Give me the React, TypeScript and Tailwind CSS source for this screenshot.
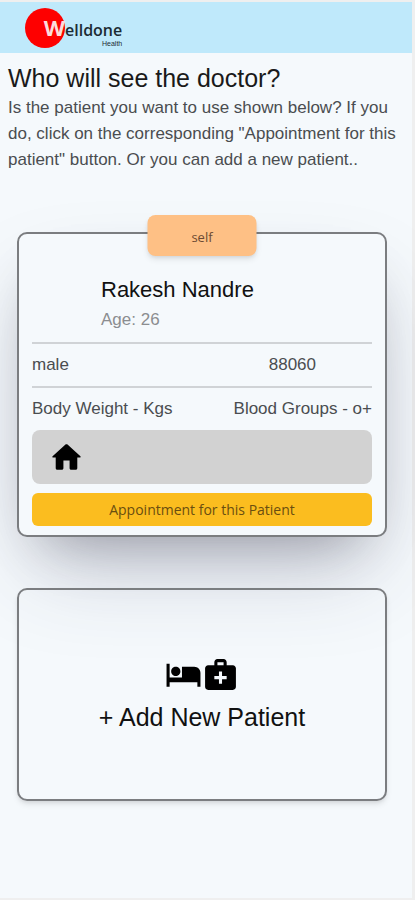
import React from 'react';
import { MdHotel, MdMedicalServices } from 'react-icons/md';

const patients = [
  { id: 1, relation: 'self', name: 'Rakesh Nandre', age: 26, gender: 'male', phone: '88060', weight: '', blood: 'o+' }
];

type Patient = (typeof patients)[number];

const HomeIcon = () => (
  <svg viewBox="0 0 24 24" width={37} height={37} fill="currentColor" className="text-black" aria-hidden="true">
    <path d="M10 19v-5h4v5c0 .55.45 1 1 1h3c.55 0 1-.45 1-1v-7h1.7c.46 0 .68-.57.33-.87L12.67 3.6c-.38-.34-.96-.34-1.34 0l-8.36 7.53c-.34.3-.13.87.33.87H5v7c0 .55.45 1 1 1h3c.55 0 1-.45 1-1z" />
  </svg>
);

const Header = () => (
  <header className="flex h-[51px] items-center bg-[#bfe9fb] pl-[25px]">
    <a href="#home" className="flex items-center">
      <span className="flex size-10 shrink-0 items-center justify-end rounded-full bg-[#fe0000] font-['Open_Sans',sans-serif] text-[22px] font-bold text-[#fbdcdc]">
        W
      </span>
      <span className="flex flex-col items-end pt-4 text-[#1c2b33]">
        <span className="font-['Open_Sans',sans-serif] text-base leading-4 font-semibold">elldone</span>
        <span className="text-[7px] leading-3">Health</span>
      </span>
    </a>
  </header>
);

const PatientCard = ({ patient }: { patient: Patient }) => (
  <article className="relative rounded-[10px] border-2 border-[#7b7d80] bg-[#f5f9fc] px-[13px] pt-10 pb-[9px] shadow-[0_45px_90px_-18px_rgba(50,50,93,0.25),0_27px_54px_-27px_rgba(0,0,0,0.3)]">
    <span className="absolute -top-[19px] left-1/2 flex h-[41px] w-[109px] -translate-x-1/2 items-center justify-center rounded-lg bg-[#fec085] pt-1 font-['Open_Sans',sans-serif] text-[13px] text-[#6b4a33] shadow-md">
      {patient.relation}
    </span>
    <div className="pb-2 pl-[69px]">
      <h2 className="text-[22px] leading-8 text-[#111]">{patient.name}</h2>
      <p className="text-[17px] leading-7 text-[#8b8d90]">Age: {patient.age}</p>
    </div>
    <div className="flex h-11 items-center justify-between border-t-2 border-[#d0d3d6] pr-14">
      <span>{patient.gender}</span>
      <span>{patient.phone}</span>
    </div>
    <div className="flex h-11 items-center justify-between border-t-2 border-[#d0d3d6]">
      <span>Body Weight - {patient.weight}Kgs</span>
      <span>Blood Groups - {patient.blood}</span>
    </div>
    <div className="flex h-[54px] items-center rounded-lg bg-[#d2d2d2] pl-4">
      <HomeIcon />
    </div>
    <button
      type="button"
      className="mt-[9px] h-[33px] w-full rounded-md bg-[#fbbd1f] font-['Open_Sans',sans-serif] text-sm text-[#6a4e10]"
    >
      Appointment for this Patient
    </button>
  </article>
);

const App = () => {
  return (
    <div className="min-h-screen border-y-2 border-r-3 border-[#efefef] bg-[#f5f9fc] font-['Liberation_Sans',Arial,sans-serif] text-[17px] text-[#4a4d50]">
      <Header />
      <main className="pb-10">
        <section className="px-2 pt-2">
          <h1 className="text-[25px] leading-[34px] text-[#1a1a1a]">Who will see the doctor?</h1>
          <p className="leading-[26px]">
            Is the patient you want to use shown below? If you do, click on the corresponding "Appointment for this
            patient" button. Or you can add a new patient..
          </p>
        </section>
        <section className="mt-[59px] flex flex-col gap-[51px] pr-[25px] pl-[17px]">
          {patients.map(patient => (
            <PatientCard key={patient.id} patient={patient} />
          ))}
          <button
            type="button"
            className="relative flex h-[213px] flex-col items-center justify-center gap-1 rounded-[10px] border-2 border-[#7b7d80] pt-1 text-[25px] leading-10 text-[#111] shadow-md"
          >
            <span className="flex text-black">
              <MdHotel size={37} />
              <MdMedicalServices size={37} />
            </span>
            + Add New Patient
          </button>
        </section>
      </main>
    </div>
  );
};

export default App;
